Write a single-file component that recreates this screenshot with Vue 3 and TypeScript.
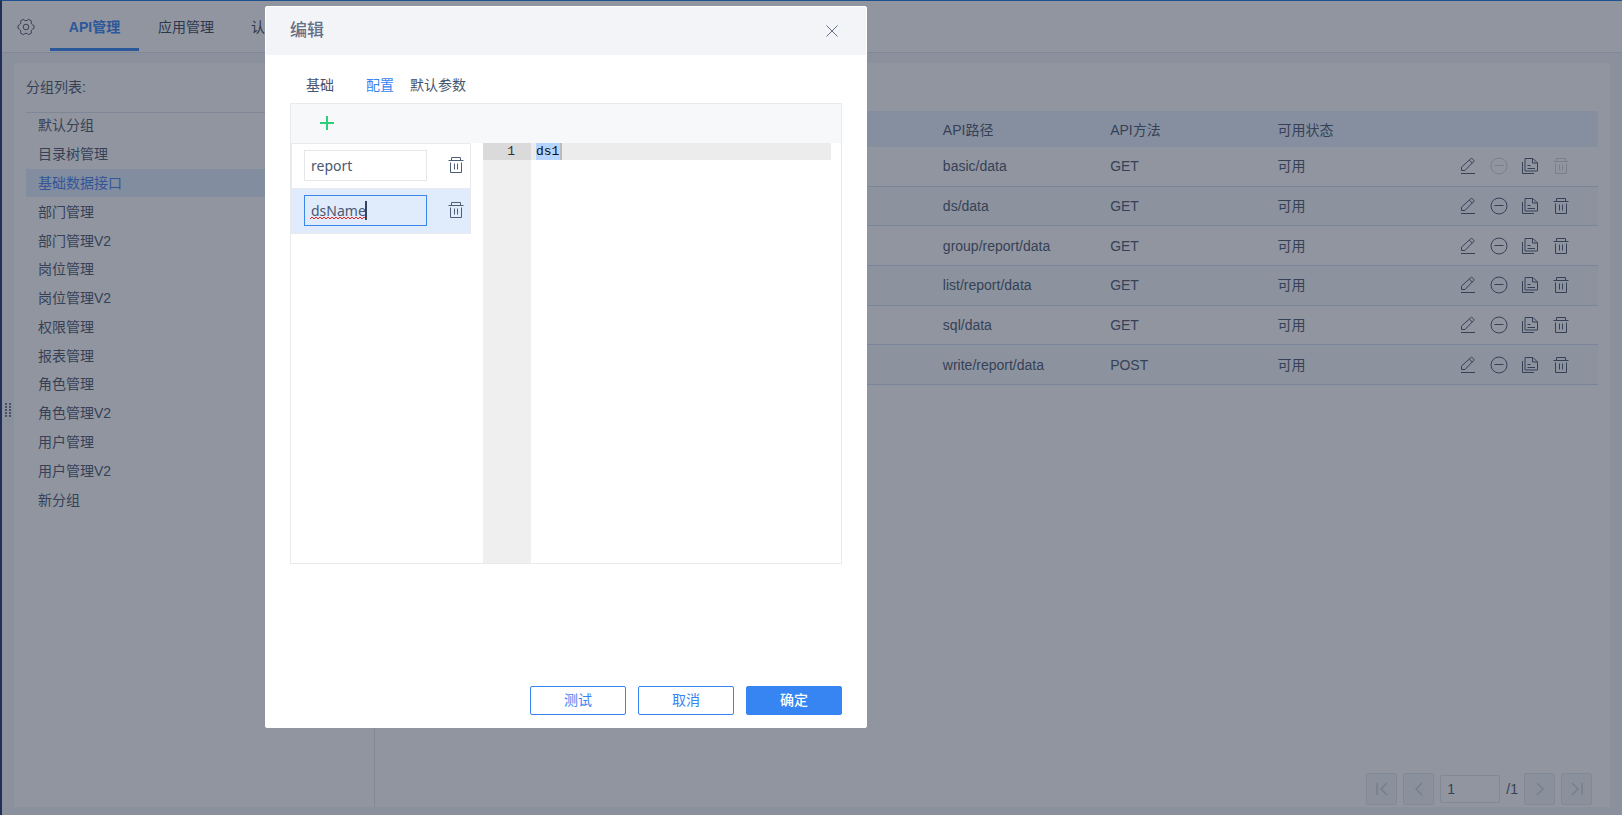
<script setup lang="ts">
import { ref } from 'vue'

interface ApiRow {
  path: string
  method: string
  status: string
  locked?: boolean
}

const groups: string[] = [
  '默认分组', '目录树管理', '基础数据接口', '部门管理', '部门管理V2', '岗位管理', '岗位管理V2',
  '权限管理', '报表管理', '角色管理', '角色管理V2', '用户管理', '用户管理V2', '新分组',
]
const activeGroup = ref('基础数据接口')

const rows: ApiRow[] = [
  { path: 'basic/data', method: 'GET', status: '可用', locked: true },
  { path: 'ds/data', method: 'GET', status: '可用' },
  { path: 'group/report/data', method: 'GET', status: '可用' },
  { path: 'list/report/data', method: 'GET', status: '可用' },
  { path: 'sql/data', method: 'GET', status: '可用' },
  { path: 'write/report/data', method: 'POST', status: '可用' },
]

const topTabs = ['API管理', '应用管理', '认']
const activeTop = ref('API管理')
const dialogTabs = ['基础', '配置', '默认参数']
const activeDialogTab = ref('配置')
const params = ref(['report', 'dsName'])
const activeParam = ref(1)
const code = ref('ds1')
const page = ref('1')
</script>

<template>
  <div class="app">
    <svg width="0" height="0" class="defs" aria-hidden="true">
      <symbol id="i-trash" viewBox="0 0 18 18">
        <path d="M1.500 4.500h15M4.500 4.500V1.500h9v3M3.500 6.500v10h11v-10M7.500 7.500v6M10.500 7.500v6" />
      </symbol>
      <symbol id="i-edit" viewBox="0 0 18 18">
        <path d="M2 16.500h14M2.500 13.500v-3.400L11.900 1.600q.6-.5 1.200 0l1.700 1.600q.5.6 0 1.200L6 13.500zM10.300 3.200l3 2.800" />
      </symbol>
      <symbol id="i-minus" viewBox="0 0 18 18">
        <circle cx="9" cy="9" r="8" /><path d="M4.500 8.500h9" />
      </symbol>
      <symbol id="i-copy" viewBox="0 0 18 18">
        <path d="M4 1.500h8l4.500 4.500v8H4zM11.500 1.500v4.500h5M1.500 5v11.500H13M6.500 8.500h3M6.500 11.500h7.500" />
      </symbol>
    </svg>

    <header class="topbar">
      <button class="icon gear" aria-label="设置">
        <svg viewBox="0 0 18 18">
          <path d="M6.300 1.300l1.500 1.100q1.200.5 2.400 0l1.500-1.100 2.700 1.600-.2 1.900q.2 1.300 1.300 2l1.500.8v2.800l-1.500.8q-1.100.7-1.300 2l.2 1.900-2.700 1.600-1.500-1.100q-1.200-.5-2.400 0l-1.500 1.100-2.700-1.600.2-1.900q-.2-1.300-1.300-2L1 10.400V7.600l1.500-.8q1.100-.7 1.300-2l-.2-1.900z" />
          <circle cx="9" cy="9" r="2.800" />
        </svg>
      </button>
      <nav class="top-tabs">
        <button v-for="t in topTabs" :key="t" :class="{ on: t === activeTop }" @click="activeTop = t">{{ t }}</button>
      </nav>
    </header>

    <div class="body">
      <div class="grip" aria-hidden="true"><i v-for="n in 10" :key="n"></i></div>
      <main class="card">
        <aside class="side">
          <h2>分组列表:</h2>
          <ul>
            <li v-for="g in groups" :key="g">
              <button :class="{ on: g === activeGroup }" @click="activeGroup = g">{{ g }}</button>
            </li>
          </ul>
        </aside>
        <section class="content">
          <table>
            <colgroup><col class="check" /><col span="7" /></colgroup>
            <thead>
              <tr>
                <th></th><th></th><th></th><th></th>
                <th>API路径</th><th>API方法</th><th>可用状态</th><th></th>
              </tr>
            </thead>
            <tbody>
              <tr v-for="r in rows" :key="r.path">
                <td></td><td></td><td></td><td></td>
                <td>{{ r.path }}</td><td>{{ r.method }}</td><td>{{ r.status }}</td>
                <td>
                  <div class="ops">
                    <button class="icon" aria-label="编辑"><svg><use href="#i-edit" /></svg></button>
                    <button class="icon" aria-label="停用" :disabled="r.locked"><svg><use href="#i-minus" /></svg></button>
                    <button class="icon" aria-label="复制"><svg><use href="#i-copy" /></svg></button>
                    <button class="icon" aria-label="删除" :disabled="r.locked"><svg><use href="#i-trash" /></svg></button>
                  </div>
                </td>
              </tr>
            </tbody>
          </table>
          <div class="pager">
            <button aria-label="首页"><svg viewBox="0 0 16 16"><path d="M3 2v12M13 2L7 8l6 6" /></svg></button>
            <button aria-label="上一页"><svg viewBox="0 0 16 16"><path d="M11 2L5 8l6 6" /></svg></button>
            <input v-model="page" aria-label="页码" />
            <span>/1</span>
            <button aria-label="下一页"><svg viewBox="0 0 16 16"><path d="M5 2l6 6-6 6" /></svg></button>
            <button aria-label="末页"><svg viewBox="0 0 16 16"><path d="M3 2l6 6-6 6M13 2v12" /></svg></button>
          </div>
        </section>
      </main>
    </div>

    <div class="mask">
      <div class="dialog" role="dialog" aria-labelledby="dlg-title">
        <div class="dlg-head">
          <h1 id="dlg-title">编辑</h1>
          <button class="icon close" aria-label="关闭"><svg viewBox="0 0 12 12"><path d="M.5.5l11 11M11.500.5l-11 11" /></svg></button>
        </div>
        <div class="dlg-body">
          <nav class="dlg-tabs">
            <button v-for="t in dialogTabs" :key="t" :class="{ on: t === activeDialogTab }" @click="activeDialogTab = t">{{ t }}</button>
          </nav>
          <div class="panel">
            <div class="tools">
              <button class="icon add" aria-label="添加"><svg viewBox="0 0 14 14"><path d="M0 7h14M7 0v14" /></svg></button>
            </div>
            <div class="split">
              <ul class="params">
                <li v-for="(p, i) in params" :key="i" :class="{ on: i === activeParam }" @click="activeParam = i">
                  <div class="field">
                    <input v-model="params[i]" spellcheck="false" :aria-label="'参数' + (i + 1)" />
                    <svg v-if="i === activeParam" class="mark" viewBox="0 0 58 20" aria-hidden="true">
                      <path class="wave" d="M0 18l2-2 2 2 2-2 2 2 2-2 2 2 2-2 2 2 2-2 2 2 2-2 2 2 2-2 2 2 2-2 2 2 2-2 2 2 2-2 2 2 2-2 2 2 2-2 2 2 2-2 2 2 2-2 2 2" />
                      <path class="caret" d="M56 0v19" />
                    </svg>
                  </div>
                  <button class="icon" aria-label="删除"><svg><use href="#i-trash" /></svg></button>
                </li>
              </ul>
              <div class="editor">
                <div class="gutter"><span>1</span></div>
                <div class="code">
                  <i class="selection" aria-hidden="true"></i>
                  <textarea v-model="code" rows="1" spellcheck="false" aria-label="代码"></textarea>
                </div>
              </div>
            </div>
          </div>
          <div class="actions">
            <button>测试</button>
            <button>取消</button>
            <button class="primary">确定</button>
          </div>
        </div>
      </div>
    </div>
  </div>
</template>

<style>
body { margin: 0; }
</style>

<style scoped>
* { box-sizing: border-box; }
.app {
  position: relative;
  display: flex;
  flex-direction: column;
  min-height: 100vh;
  border-top: 1px solid #1d5190;
  border-left: 2px solid #1f2f55;
  background: #eff5fa;
  color: #465470;
  font: 14px/20px "Liberation Sans", "Noto Sans CJK SC", sans-serif;
}
.defs { position: absolute; }
button { padding: 0; border: 0; background: none; color: inherit; font: inherit; cursor: pointer; }
ul { margin: 0; padding: 0; list-style: none; }
svg { fill: none; stroke: currentColor; stroke-width: 1; }
.icon { display: flex; flex: none; align-items: center; justify-content: center; }
.icon svg { width: 18px; height: 18px; }

.topbar { display: flex; height: 52px; padding-left: 15px; border-bottom: 1px solid #dbe1ec; background: #fdfdfe; }
.gear { width: 18px; }
.top-tabs { display: flex; gap: 1px; margin-left: 15px; color: #35425c; }
.top-tabs button { height: 50px; padding: 4px 18px 0; border-bottom: 3px solid transparent; }
.top-tabs .on { min-width: 89px; border-color: #2e82f4; color: #2e82f4; font-weight: bold; }

.body { flex: 1; display: flex; padding: 10px 12px 8px 0; }
.grip { display: grid; grid-template-columns: 2px 2px; gap: 1px 2px; align-content: center; justify-content: center; width: 12px; padding-bottom: 50px; }
.grip i { width: 2px; height: 2px; background: #6a7488; }
.card { flex: 1; display: flex; min-width: 0; background: #fdfdfe; }
.side { width: 361px; padding-left: 12px; border-right: 1px solid #dbe3f0; }
.side h2 { height: 50px; margin: 0; padding-top: 14px; border-bottom: 1px solid #d9deea; font-size: 14px; font-weight: normal; }
.side ul { display: grid; grid-auto-rows: 1fr; height: 403px; margin-top: -2px; }
.side li { display: flex; }
.side li button { flex: 1; padding-left: 12px; text-align: left; }
.side li .on { background: #dfecff; color: #3f7ff0; }

.content { flex: 1; display: flex; flex-direction: column; min-width: 0; padding: 48px 12px 2px; }
table { width: 100%; height: 274px; border-collapse: separate; border-spacing: 0; table-layout: fixed; }
.check { width: 40px; }
th { height: 36px; padding: 2px 0 0 14px; background: #e6f1ff; font-weight: normal; text-align: left; }
td { padding: 0 0 0 14px; border-bottom: 1px solid #cfddf8; }
tr:nth-child(even) td { background: #f3f9fc; }
.ops { display: flex; gap: 13px; padding-left: 14px; }
.ops button:disabled { color: #ccd1db; }
.pager { display: flex; align-items: center; gap: 6px; margin-top: auto; padding-right: 6px; justify-content: flex-end; }
.pager button { display: grid; place-items: center; width: 31px; height: 32px; border: 1px solid #dde2ec; border-radius: 2px; background: #eff4f9; color: #c8cfdb; }
.pager svg { width: 16px; height: 16px; stroke-width: 1.500; }
.pager input { width: 60px; height: 28px; padding: 0 6px; border: 1px solid #dde2ec; border-radius: 2px; background: transparent; color: inherit; font: inherit; }

.mask { position: absolute; inset: 0; padding: 5px 0 0 263px; background: rgba(37, 45, 63, 0.5); }
.dialog { display: flex; flex-direction: column; width: 602px; min-height: calc(100vh - 93px); border: 1px solid #fff; border-radius: 2px; background: #fff; }
.dlg-head { display: flex; align-items: center; justify-content: space-between; height: 48px; padding: 0 28px 0 24px; background: #f2f4f8; color: #657086; }
.dlg-head h1 { margin: 0; font-size: 17px; font-weight: 500; }
.close svg { width: 12px; height: 12px; }
.dlg-body { flex: 1; display: flex; flex-direction: column; padding: 16px 24px 12px; }
.dlg-tabs { display: flex; height: 32px; padding-left: 8px; }
.dlg-tabs button { height: 28px; padding: 0 8px; }
.dlg-tabs button:first-child { margin-right: 16px; }
.dlg-tabs .on { color: #3685f2; }
.panel { display: flex; flex-direction: column; height: 461px; border: 1px solid #e8eaec; }
.tools { display: flex; align-items: center; height: 39px; padding: 0 0 1px 29px; background: #f7f8fa; }
.add { color: #2fd077; }
.add svg { width: 14px; height: 14px; stroke-width: 2; }
.split { flex: 1; display: flex; gap: 12px; padding-right: 10px; }
.params { width: 180px; }
.params li { display: flex; align-items: center; justify-content: space-between; height: 46px; padding: 0 5px 2px 12px; border: 1px solid #e8eaee; }
.params li + li { border-top: 0; height: 45px; }
.params .on { background: #e0ebfc; }
.field { position: relative; width: 123px; height: 31px; }
.field input { width: 100%; height: 100%; padding: 0 6px; border: 1px solid #e4e6ea; outline: 0; background: transparent; color: #4a5870; font: 14px/20px "Noto Sans", "Noto Sans CJK SC", sans-serif; }
.on .field input { border-color: #3a86ea; }
.mark { position: absolute; left: 6px; top: 6px; width: 58px; height: 20px; pointer-events: none; }
.wave { stroke: #f02020; }
.caret { stroke: #34425c; stroke-width: 2; }
.params .icon { width: 18px; color: #4f5d76; }
.editor { flex: 1; display: flex; font: 13px/17px "Liberation Mono", "DejaVu Sans Mono", monospace; }
.gutter { width: 48px; background: #efefef; color: #333; text-align: right; }
.gutter span { display: block; padding-right: 16px; background: #dadada; }
.code { position: relative; flex: 1; height: 17px; padding-left: 5px; background: #ececec; }
.selection { position: absolute; left: 5px; top: 0; width: 26px; height: 17px; border-right: 2px solid #bbbcc0; background: #b5d5ff; }
.code textarea { position: relative; display: block; width: 100%; height: 17px; padding: 0; border: 0; outline: 0; background: transparent; color: #111; font: inherit; resize: none; overflow: hidden; }
.actions { display: flex; justify-content: flex-end; gap: 12px; margin-top: auto; }
.actions button { width: 96px; height: 29px; padding-bottom: 2px; border: 1px solid #3685f2; border-radius: 2px; color: #3685f2; }
.actions .primary { background: #3685f2; color: #fff; font-weight: 500; }
</style>
